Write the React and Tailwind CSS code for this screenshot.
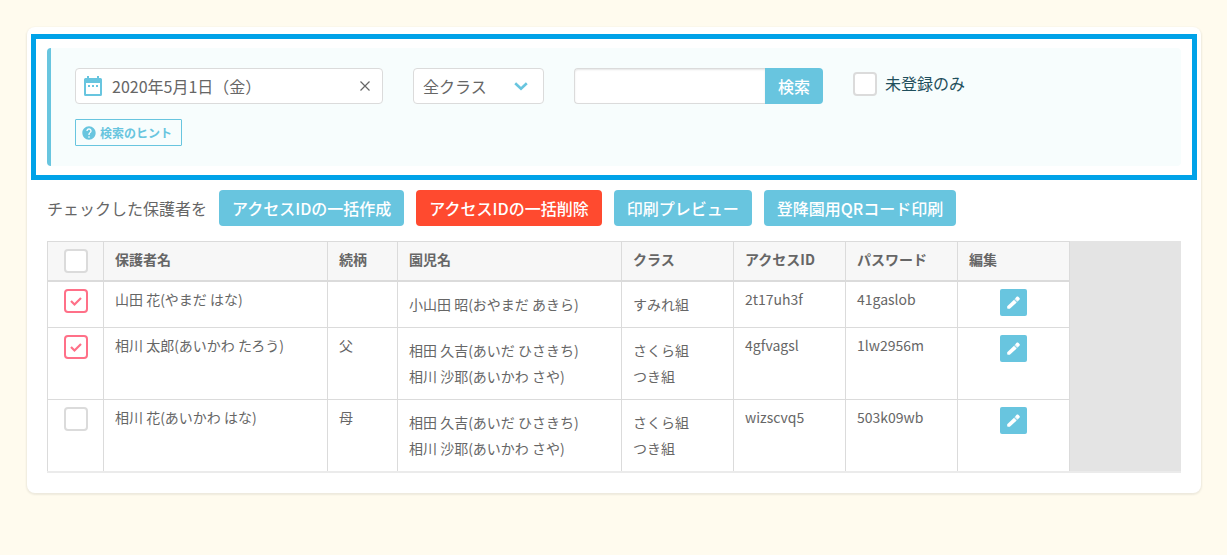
import React, { useState } from "react";
import { MdHelp } from "react-icons/md";

const guardians = [
  {
    name: "山田 花(やまだ はな)",
    relation: "",
    children: ["小山田 昭(おやまだ あきら)"],
    classes: ["すみれ組"],
    id: "2t17uh3f",
    password: "41gaslob",
    checked: true,
  },
  {
    name: "相川 太郎(あいかわ たろう)",
    relation: "父",
    children: ["相田 久吉(あいだ ひさきち)", "相川 沙耶(あいかわ さや)"],
    classes: ["さくら組", "つき組"],
    id: "4gfvagsl",
    password: "1lw2956m",
    checked: true,
  },
  {
    name: "相川 花(あいかわ はな)",
    relation: "母",
    children: ["相田 久吉(あいだ ひさきち)", "相川 沙耶(あいかわ さや)"],
    classes: ["さくら組", "つき組"],
    id: "wizscvq5",
    password: "503k09wb",
    checked: false,
  },
];

function CalendarIcon() {
  return (
    <svg viewBox="0 0 18 20" fill="#68c5df" className="h-5 w-[18px] shrink-0">
      <path
        fillRule="evenodd"
        d="M3 0h2v2h8V0h2v2h1.500a1.500 1.500 0 0 1 1.500 1.500v15a1.500 1.500 0 0 1-1.500 1.500h-15A1.500 1.500 0 0 1 0 18.500v-15A1.500 1.500 0 0 1 1.500 2H3zM2 7v11h14V7z"
      />
      <path d="M4 9h2v2H4zM8 9h2v2H8zM12 9h2v2h-2z" />
    </svg>
  );
}

function Checkbox({ defaultChecked = false, ...props }) {
  return (
    <span className="grid size-6 shrink-0">
      <input
        type="checkbox"
        defaultChecked={defaultChecked}
        className="peer col-start-1 row-start-1 size-6 appearance-none rounded border-2 border-[#dbdbdb] bg-white checked:border-[#ff7088]"
        {...props}
      />
      <svg
        viewBox="0 0 24 24"
        fill="none"
        stroke="#ff7088"
        strokeWidth="2.2"
        className="pointer-events-none invisible col-start-1 row-start-1 size-6 peer-checked:visible"
      >
        <path d="M7 12l3.500 3.500L17 9" />
      </svg>
    </span>
  );
}

function ActionButton({ danger = false, children }) {
  return (
    <button
      type="button"
      className={`h-9 rounded px-[13px] text-base font-medium text-white ${danger ? "bg-[#ff4a2f]" : "bg-[#68c5df]"}`}
    >
      {children}
    </button>
  );
}

function HeaderCell({ children }) {
  return (
    <th
      scope="col"
      className="border-t border-b-2 border-l border-[#dbdbdb] bg-[#f7f7f7] px-[11px] pt-[7px] text-left align-top font-bold last:border-r"
    >
      {children}
    </th>
  );
}

const cell = "border-l border-[#dbdbdb] px-[11px] align-top";

function Row({ guardian, last }) {
  const line = last ? "" : "border-b";
  return (
    <tr className="bg-white">
      <td className={`${cell} ${line} pt-[7px]`}>
        <div className="flex justify-center">
          <Checkbox defaultChecked={guardian.checked} aria-label={guardian.name} />
        </div>
      </td>
      <td className={`${cell} ${line} pt-[7px]`}>{guardian.name}</td>
      <td className={`${cell} ${line} pt-[7px]`}>{guardian.relation}</td>
      <td className={`${cell} ${line} pt-[9px] pb-[10px] leading-[26px]`}>
        {guardian.children.map((c) => (
          <div key={c}>{c}</div>
        ))}
      </td>
      <td className={`${cell} ${line} pt-[9px] pb-[10px] leading-[26px]`}>
        {guardian.classes.map((c) => (
          <div key={c}>{c}</div>
        ))}
      </td>
      <td className={`${cell} ${line} pt-[7px]`}>{guardian.id}</td>
      <td className={`${cell} ${line} pt-[7px]`}>{guardian.password}</td>
      <td className={`${cell} ${line} border-r pt-[7px]`}>
        <div className="flex justify-center">
          <button
            type="button"
            aria-label="編集"
            className="flex size-[27px] items-center justify-center rounded-xs bg-[#68c5df] text-white"
          >
            <svg viewBox="0 0 13 13" fill="currentColor" className="size-[13px]">
              <path d="M.2 10.200v1.900c0 .4.3.7.7.7h1.900l6.900-6.400-2.700-2.700z" />
              <path d="M7.400 3.300l2.700 2.700.7-.7-2.700-2.700z" opacity=".75" />
              <path d="M8.100 2.600l2.700 2.700 1.600-1.500c.6-.6.6-1.300.1-1.800l-1.200-1.200c-.5-.5-1.200-.5-1.700 0z" />
            </svg>
          </button>
        </div>
      </td>
    </tr>
  );
}

export default function App() {
  const [date, setDate] = useState("2020年5月1日（金）");
  return (
    <div className="min-h-screen bg-[#fffbee] pt-[27px] pr-[26px] pb-[61px] pl-[27px] font-['Noto_Sans_CJK_JP',sans-serif] text-[#666666]">
      <main className="rounded-lg bg-white px-1 pt-[7px] pb-5 shadow-[0_1px_2px_1px_rgba(0,0,0,0.07)]">
        <section className="border-5 border-[#00a2e8] px-[11px] py-[9px]">
          <form
            className="rounded border-l-4 border-[#68c5df] bg-[#f7fdfd] py-5 pr-5 pl-6"
            onSubmit={(e) => e.preventDefault()}
          >
            <div className="flex flex-wrap gap-x-[30px] gap-y-4">
              <div className="flex h-9 w-[308px] items-center rounded border border-[#dbdbdb] bg-white pr-3 pl-2">
                <CalendarIcon />
                <input
                  type="text"
                  aria-label="日付"
                  value={date}
                  onChange={(e) => setDate(e.target.value)}
                  className="ml-[10px] h-full min-w-0 flex-1 bg-transparent text-base outline-none"
                />
                <button type="button" aria-label="クリア" onClick={() => setDate("")}>
                  <svg viewBox="0 0 10 10" stroke="#666666" strokeWidth="1.2" className="size-[10px]">
                    <path d="M.5.5l9 9M9.500.5l-9 9" />
                  </svg>
                </button>
              </div>

              <div className="grid h-9 w-[131px] items-center">
                <select
                  aria-label="クラス"
                  className="col-start-1 row-start-1 h-9 w-full appearance-none rounded border border-[#dbdbdb] bg-white pr-10 pl-[9px] text-base"
                >
                  <option>全クラス</option>
                  <option>すみれ組</option>
                  <option>さくら組</option>
                  <option>つき組</option>
                </select>
                <svg
                  viewBox="0 0 14 9"
                  fill="none"
                  stroke="#68c5df"
                  strokeWidth="2.6"
                  className="pointer-events-none col-start-1 row-start-1 mr-4 h-[9px] w-[14px] justify-self-end"
                >
                  <path d="M1.200 1.200L7 6.800l5.800-5.600" />
                </svg>
              </div>

              <div className="flex h-9">
                <input
                  type="text"
                  aria-label="検索キーワード"
                  className="h-9 w-[191px] rounded-l border border-r-0 border-[#dbdbdb] bg-white px-2 text-base shadow-[inset_0_1px_2px_rgba(10,10,10,0.1)] outline-none"
                />
                <button type="submit" className="h-9 w-[58px] rounded-r bg-[#68c5df] text-base font-medium text-white">
                  検索
                </button>
              </div>

              <label className="flex h-8 items-center gap-2 text-base leading-[22px] text-[#1f4f5c]">
                <Checkbox />
                <span className="pb-0.5">未登録のみ</span>
              </label>
            </div>

            <button
              type="button"
              className="mt-[15px] flex h-[27px] items-center gap-[3px] rounded-[1px] border border-[#68c5df] pr-[9px] pl-[5px] text-xs font-bold text-[#68c5df]"
            >
              <MdHelp className="size-4" />
              検索のヒント
            </button>
          </form>
        </section>

        <div className="px-4">
          <div className="mt-[10px] flex flex-wrap items-center gap-3">
            <span className="text-base">チェックした保護者を</span>
            <ActionButton>アクセスIDの一括作成</ActionButton>
            <ActionButton danger>アクセスIDの一括削除</ActionButton>
            <ActionButton>印刷プレビュー</ActionButton>
            <ActionButton>登降園用QRコード印刷</ActionButton>
          </div>

          <div className="mt-[15px] overflow-x-auto border-b-2 border-[#ebebeb] bg-[#e4e4e4]">
            <table className="w-[1023px] table-fixed border-separate border-spacing-0 text-sm leading-[21px]">
              <colgroup>
                <col className="w-14" />
                <col className="w-56" />
                <col className="w-[70px]" />
                <col className="w-56" />
                <col className="w-28" />
                <col className="w-28" />
                <col className="w-28" />
                <col className="w-[113px]" />
              </colgroup>
              <thead>
                <tr className="h-[41px]">
                  <HeaderCell>
                    <div className="flex justify-center">
                      <Checkbox aria-label="すべて選択" />
                    </div>
                  </HeaderCell>
                  <HeaderCell>保護者名</HeaderCell>
                  <HeaderCell>続柄</HeaderCell>
                  <HeaderCell>園児名</HeaderCell>
                  <HeaderCell>クラス</HeaderCell>
                  <HeaderCell>アクセスID</HeaderCell>
                  <HeaderCell>パスワード</HeaderCell>
                  <HeaderCell>編集</HeaderCell>
                </tr>
              </thead>
              <tbody>
                {guardians.map((g, i) => (
                  <Row key={g.id} guardian={g} last={i === guardians.length - 1} />
                ))}
              </tbody>
            </table>
          </div>
        </div>
      </main>
    </div>
  );
}
